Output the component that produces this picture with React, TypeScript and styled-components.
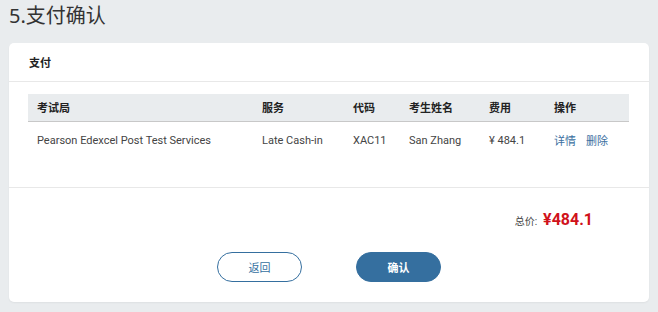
import React from 'react';
import styled, { createGlobalStyle } from 'styled-components';

const GlobalStyle = createGlobalStyle`
    html, body {
        margin: 0;
        padding: 0;
        background: #e9ecee;
        font-family: Roboto, "Noto Sans CJK SC", sans-serif;
        color: #333333;
    }
`;

const Page = styled.div`
    padding: 0 9px 10px;
`;

const Title = styled.h2`
    margin: 0;
    height: 43px;
    padding-top: 2px;
    box-sizing: border-box;
    font-family: "Noto Sans", "Noto Sans CJK SC", sans-serif;
    font-size: 20px;
    font-weight: 400;
    line-height: 28px;
    color: #333333;
`;

const Card = styled.div`
    background: #ffffff;
    border-radius: 5px;
    box-shadow: 0 1px 2px rgba(0, 0, 0, 0.05);
`;

const CardHeader = styled.div`
    height: 38px;
    padding: 0 20px;
    display: flex;
    align-items: center;
    border-bottom: 1px solid #e8e8e8;
    font-size: 11px;
    font-weight: 700;
    color: #222222;
`;

const CardBody = styled.div`
    padding: 12px 20px 0 19px;
    border-bottom: 1px solid #e8e8e8;
    height: 93px;
`;

const Table = styled.table`
    width: 100%;
    table-layout: fixed;
    border-collapse: collapse;
    font-size: 11px;
`;

const Th = styled.th<{ $w: number }>`
    box-sizing: border-box;
    width: ${(p) => p.$w}px;
    height: 27px;
    padding: 0 0 0 9px;
    text-align: left;
    font-weight: 700;
    color: #222222;
    background: #e9ecee;
    border-bottom: 1px solid #c8c8c8;
`;

const Td = styled.td`
    height: 37px;
    padding: 0 0 0 9px;
    color: #444444;
    font-size: 11px;
    white-space: nowrap;
`;

const ActionLink = styled.a`
    color: #3b6fa0;
    font-size: 11px;
    text-decoration: none;
    margin-right: 10px;
    cursor: pointer;
`;

const TotalRow = styled.div`
    display: flex;
    justify-content: flex-end;
    align-items: baseline;
    padding: 22px 56px 0 0;
`;

const TotalLabel = styled.span`
    font-size: 10px;
    color: #444444;
    margin-right: 6px;
`;

const TotalValue = styled.span`
    font-size: 16px;
    font-weight: 700;
    color: #d0121b;
`;

const Actions = styled.div`
    display: flex;
    justify-content: center;
    gap: 54px;
    padding: 23px 0 20px;
`;

const Button = styled.button<{ $primary?: boolean }>`
    width: 85px;
    height: 30px;
    border-radius: 15px;
    border: 1px solid #356f9f;
    background: ${(p) => (p.$primary ? '#356f9f' : '#ffffff')};
    color: ${(p) => (p.$primary ? '#ffffff' : '#356f9f')};
    font-family: inherit;
    font-size: 11px;
    font-weight: ${(p) => (p.$primary ? 700 : 400)};
    cursor: pointer;
`;

const App = () => {
    return (
        <>
            <GlobalStyle />
            <Page>
                <Title>5.支付确认</Title>
                <Card>
                    <CardHeader>支付</CardHeader>
                    <CardBody>
                        <Table>
                            <thead>
                                <tr>
                                    <Th $w={225}>考试局</Th>
                                    <Th $w={91}>服务</Th>
                                    <Th $w={56}>代码</Th>
                                    <Th $w={80}>考生姓名</Th>
                                    <Th $w={65}>费用</Th>
                                    <Th $w={84}>操作</Th>
                                </tr>
                            </thead>
                            <tbody>
                                <tr>
                                    <Td>Pearson Edexcel Post Test Services</Td>
                                    <Td>Late Cash-in</Td>
                                    <Td>XAC11</Td>
                                    <Td>San Zhang</Td>
                                    <Td>¥ 484.1</Td>
                                    <Td>
                                        <ActionLink>详情</ActionLink>
                                        <ActionLink>删除</ActionLink>
                                    </Td>
                                </tr>
                            </tbody>
                        </Table>
                    </CardBody>
                    <TotalRow>
                        <TotalLabel>总价:</TotalLabel>
                        <TotalValue>¥484.1</TotalValue>
                    </TotalRow>
                    <Actions>
                        <Button>返回</Button>
                        <Button $primary>确认</Button>
                    </Actions>
                </Card>
            </Page>
        </>
    );
};

export default App;
